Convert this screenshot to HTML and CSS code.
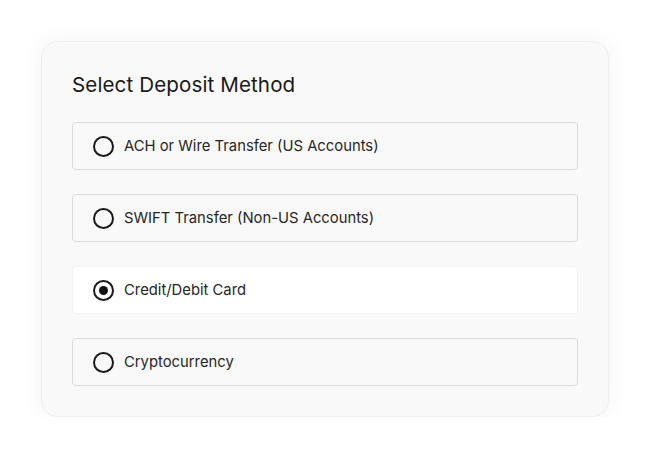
FILE: index.html
```html
<!DOCTYPE html>
<html>
  <head>
    <title>Select Deposit Method</title>
    <link rel="stylesheet" href="styles.css">
  </head>
  <body>
    <div class="card">
      <h2 class="card-title">Select Deposit Method</h2>

      <div class="options">
        <label class="option">
          <span class="radio"></span>
          <span class="option-text">ACH or Wire Transfer (US Accounts)</span>
        </label>
        <label class="option">
          <span class="radio"></span>
          <span class="option-text">SWIFT Transfer (Non-US Accounts)</span>
        </label>
        <label class="option selected">
          <span class="radio"></span>
          <span class="option-text">Credit/Debit Card</span>
        </label>
        <label class="option">
          <span class="radio"></span>
          <span class="option-text">Cryptocurrency</span>
        </label>
      </div>
    </div>
  </body>
</html>
```

FILE: styles.css
```css
body {
  margin: 0;
  background: #fff;
  font-family: Inter, "Noto Sans", sans-serif;
  color: #1a1a1a;
  padding: 41px 41px 0 41px;
}

.card {
  width: 568px;
  box-sizing: border-box;
  background: #f9f9f9;
  border: 1px solid #efefef;
  border-radius: 16px;
  padding: 31px 30px 30px 30px;
  box-shadow: 0 0 24px rgba(0, 0, 0, 0.05);
}

.card-title {
  margin: 0 0 25px 0;
  font-size: 20.6px;
  line-height: 24px;
  font-weight: 400;
  letter-spacing: 0.1px;
  color: #1a1a1a;
}

.options {
  display: flex;
  flex-direction: column;
  gap: 24px;
}

.option {
  display: flex;
  align-items: center;
  gap: 10px;
  height: 48px;
  box-sizing: border-box;
  padding: 0 20px;
  border: 1px solid #dcdcdc;
  border-radius: 4px;
  background: #f9f9f9;
  font-size: 14.8px;
  color: #262626;
  cursor: pointer;
}

.option.selected {
  background: #fff;
  border-color: #f3f3f3;
}

.radio {
  width: 21px;
  height: 21px;
  box-sizing: border-box;
  border: 2px solid #1a1a1a;
  border-radius: 50%;
  display: flex;
  align-items: center;
  justify-content: center;
  flex-shrink: 0;
}

.selected .radio::after {
  content: "";
  width: 9px;
  height: 9px;
  border-radius: 50%;
  background: #111;
}
```
